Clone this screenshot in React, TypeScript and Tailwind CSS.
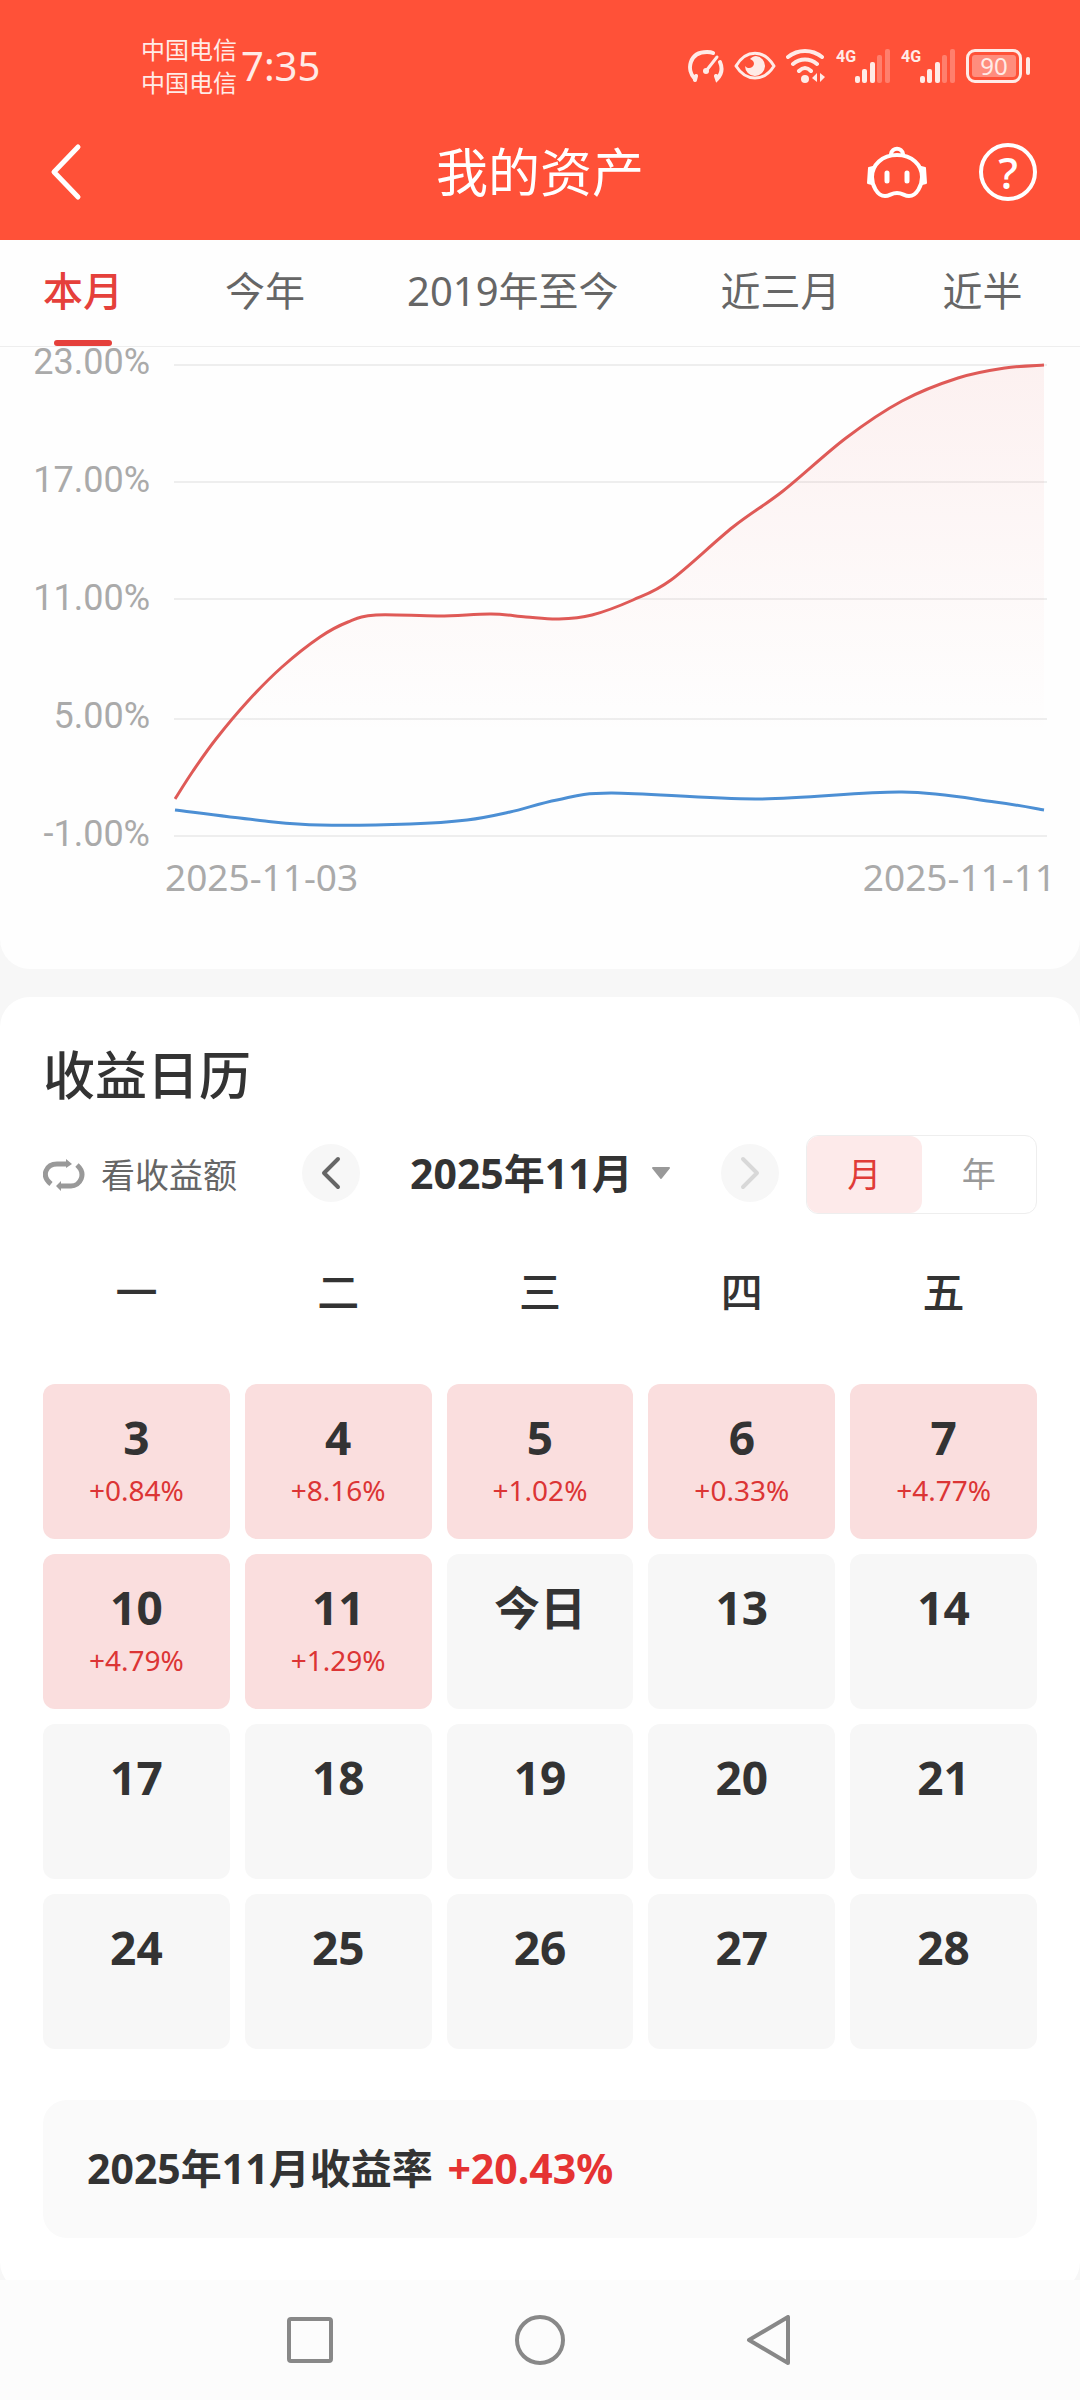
import { useState } from "react";

type Point = [number, number];

const tabs = ["本月", "今年", "2019年至今", "近三月", "近半"];
const weekdays = ["一", "二", "三", "四", "五"];
const yLabels = ["23.00%", "17.00%", "11.00%", "5.00%", "-1.00%"];
const gridLines = [18, 135, 252, 372, 489];

const days: { label: string; rate?: string }[] = [
  { label: "3", rate: "+0.84%" },
  { label: "4", rate: "+8.16%" },
  { label: "5", rate: "+1.02%" },
  { label: "6", rate: "+0.33%" },
  { label: "7", rate: "+4.77%" },
  { label: "10", rate: "+4.79%" },
  { label: "11", rate: "+1.29%" },
  { label: "今日" },
  { label: "13" },
  { label: "14" },
  { label: "17" },
  { label: "18" },
  { label: "19" },
  { label: "20" },
  { label: "21" },
  { label: "24" },
  { label: "25" },
  { label: "26" },
  { label: "27" },
  { label: "28" },
];

const mine: Point[] = [
  [1, 452], [19, 424], [42, 392], [74, 354], [108, 320], [146, 290], [174, 275], [202, 268],
  [265, 269], [317, 267], [352, 270], [385, 272], [418, 268], [459, 253], [497, 233], [559, 180],
  [609, 144], [672, 91], [728, 54], [784, 31], [831, 21], [870, 18],
];

const index: Point[] = [
  [1, 463], [91, 474], [146, 478], [236, 477], [293, 473], [336, 465],
  [383, 453], [437, 446], [583, 452], [728, 445], [821, 455], [870, 463],
];

// Catmull-Rom spline through the points
const smooth = (pts: Point[]) => {
  let d = `M${pts[0][0]} ${pts[0][1]}`;
  for (let i = 0; i < pts.length - 1; i++) {
    const p0 = pts[i - 1] || pts[i];
    const p1 = pts[i];
    const p2 = pts[i + 1];
    const p3 = pts[i + 2] || p2;
    d += ` C${p1[0] + (p2[0] - p0[0]) / 6} ${p1[1] + (p2[1] - p0[1]) / 6} ${p2[0] - (p3[0] - p1[0]) / 6} ${p2[1] - (p3[1] - p1[1]) / 6} ${p2[0]} ${p2[1]}`;
  }
  return d;
};

const Signal = () => (
  <div className="flex items-start h-[34px]">
    <span className="w-[18px] font-[Roboto] text-[16px] leading-4 font-bold">4G</span>
    <svg className="ml-px" width="36" height="34" viewBox="0 0 36 34" fill="currentColor">
      <rect x="0" y="27" width="5" height="7" rx="2" />
      <rect x="7" y="20" width="5" height="14" rx="2" />
      <rect x="15" y="13" width="5" height="21" rx="2" />
      <rect x="22" y="6" width="5" height="28" rx="2" opacity="0.3" />
      <rect x="30" y="0" width="5" height="34" rx="2" opacity="0.3" />
    </svg>
  </div>
);

const StatusBar = () => (
  <div className="flex items-center justify-between h-[104px] pt-7 pl-[141px] pr-[50px] text-[#ffebe7]">
    <div className="flex items-center gap-1">
      <div className="text-[24px] leading-[33px]">
        <p>中国电信</p>
        <p>中国电信</p>
      </div>
      <span className="text-[40px] leading-10">7:35</span>
    </div>
    <div className="flex items-center gap-[10px]">
      <svg width="36" height="34" viewBox="0 0 36 34" fill="none" stroke="currentColor" strokeWidth="4" strokeLinecap="round">
        <path d="M7 31 L8 27 M7 30 C-2 21 1 3 19 3 C21 3 23 3 25 4 M32 13 C35 20 33 26 29 30 L28 27" />
        <circle cx="18" cy="22" r="3" fill="currentColor" stroke="none" />
        <path d="M18 22 L29 8" strokeWidth="3" />
      </svg>
      <svg width="42" height="30" viewBox="0 0 42 30" fill="none">
        <path d="M2 15 C12 -2 30 -2 40 15 C30 31 12 31 2 15Z" stroke="currentColor" strokeWidth="3" strokeLinejoin="round" />
        <path d="M22 5 A10 10 0 1 1 11 15 C13 18 19 18 20 13 C20 10 18 9 16 8 C18 6 20 5 22 5Z" fill="currentColor" />
      </svg>
      <svg width="40" height="34" viewBox="0 0 40 34" fill="none" stroke="currentColor" strokeWidth="4" strokeLinecap="round">
        <path d="M2 8 C12 0 26 0 36 8 M7 15 C14 9 24 9 31 15 M13 22 C17 18 21 18 25 22" />
        <circle cx="19" cy="30" r="4" fill="currentColor" stroke="none" />
        <path d="M26 29 L31 24 V33 M34 24 V33 L39 28Z" fill="currentColor" stroke="none" />
      </svg>
      <Signal />
      <Signal />
      <div className="flex items-center gap-1">
        <div className="flex h-[34px] w-14 rounded-[9px] border-3 border-current p-[3px]">
          <span className="flex flex-1 items-center justify-center rounded-[3px] bg-white/35 text-[24px] leading-5">90</span>
        </div>
        <div className="h-[18px] w-1 rounded-full bg-current" />
      </div>
    </div>
  </div>
);

const Chart = () => (
  <section className="rounded-b-[30px] bg-[#fefefe] pb-[72px]">
    <div className="flex gap-6 pl-8 pr-8 text-[#aaaaaa]">
      <div className="flex w-[118px] flex-col justify-between text-right font-[Roboto] text-[36px] leading-[30px]">
        {yLabels.map((label) => (
          <span key={label}>{label}</span>
        ))}
      </div>
      <svg className="min-w-0 flex-1" viewBox="0 0 874 502" fill="none">
        <defs>
          <linearGradient id="area" gradientUnits="userSpaceOnUse" x1="0" y1="18" x2="0" y2="390">
            <stop offset="0" stopColor="#e5403b" stopOpacity="0.07" />
            <stop offset="1" stopColor="#e5403b" stopOpacity="0" />
          </linearGradient>
        </defs>
        {gridLines.map((y) => (
          <path key={y} d={`M0 ${y}H873`} stroke="#eeeeee" strokeWidth="2" />
        ))}
        <path d={`${smooth(mine)} V489 H1 Z`} fill="url(#area)" />
        <path d={smooth(mine)} stroke="#df5a57" strokeWidth="3" />
        <path d={smooth(index)} stroke="#4c8fd4" strokeWidth="3" />
      </svg>
    </div>
    <div className="flex justify-between pl-[165px] pr-6 pt-2 text-[37px] leading-10 text-[#aaaaaa]">
      <span>2025-11-03</span>
      <span>2025-11-11</span>
    </div>
  </section>
);

const Calendar = () => {
  const [mode, setMode] = useState("月");

  return (
    <section className="mt-7 rounded-[30px] bg-white px-[43px] pt-[45px] pb-[54px] text-[#333333]">
      <h2 className="text-[52px] leading-[66px] font-medium">收益日历</h2>

      <div className="mt-[27px] flex items-center">
        <button className="flex items-center gap-4 text-[34px] leading-10 text-[#666666]">
          <svg width="42" height="34" viewBox="-1 -1 42 34" fill="none" stroke="#999999" strokeWidth="5">
            <path d="M7 25 C-4 16 3 5 13 5 H23 M33 6 C43 15 36 27 27 27 H17" />
            <path d="M22 0 L28 5 L22 9Z M17 22 L12 27 L17 32Z" fill="#999999" stroke="none" />
          </svg>
          看收益额
        </button>
        <div className="ml-[65px] mb-1 flex items-center gap-[50px]">
          <button aria-label="上个月" className="flex size-[58px] items-center justify-center rounded-full bg-[#f7f7f7]">
            <svg width="20" height="34" viewBox="0 0 20 34" fill="none" stroke="#666666" strokeWidth="4" strokeLinecap="round" strokeLinejoin="round">
              <path d="M17 3 L3 17 L17 31" />
            </svg>
          </button>
          <button className="flex items-center gap-[18px] text-[41px] leading-[50px] font-bold">
            2025年11月
            <svg width="20" height="14" viewBox="0 0 20 14" fill="#999999" stroke="#999999" strokeWidth="2" strokeLinejoin="round">
              <path d="M2 2 H18 L10 12Z" />
            </svg>
          </button>
          <button aria-label="下个月" className="flex size-[58px] items-center justify-center rounded-full bg-[#f7f7f7]">
            <svg width="20" height="34" viewBox="0 0 20 34" fill="none" stroke="#d8d8d8" strokeWidth="4" strokeLinecap="round" strokeLinejoin="round">
              <path d="M3 3 L17 17 L3 31" />
            </svg>
          </button>
        </div>
        <div className="ml-auto flex h-[79px] w-[231px] rounded-xl border border-[#eeeeee] text-[34px]">
          {["月", "年"].map((m) => (
            <button
              key={m}
              onClick={() => setMode(m)}
              className={`flex-1 rounded-xl ${mode === m ? "bg-[#fdeaea] text-[#e03c38]" : "text-[#999999]"}`}
            >
              {m}
            </button>
          ))}
        </div>
      </div>

      <div className="mt-12 grid grid-cols-5 gap-[15px] text-center text-[42px] leading-[60px] font-medium">
        {weekdays.map((d) => (
          <span key={d}>{d}</span>
        ))}
      </div>

      <div className="mt-[62px] grid grid-cols-5 gap-[15px]">
        {days.map((day) => (
          <button
            key={day.label}
            className={`flex h-[155px] flex-col items-center rounded-xl pt-[25px] ${day.rate ? "bg-[#fadede]" : "bg-[#f7f7f7]"}`}
          >
            <span className="text-[46px] leading-[56px] font-bold">{day.label}</span>
            {day.rate && <span className="mt-[5px] text-[28px] leading-[40px] text-[#dc3535]">{day.rate}</span>}
          </button>
        ))}
      </div>

      <div className="mt-[51px] rounded-3xl bg-[#fafafa] px-11 pt-[39px] pb-[41px] text-[41px] leading-[58px] font-bold">
        2025年11月收益率 <span className="ml-1 text-[#e53333]">+20.43%</span>
      </div>
    </section>
  );
};

const App = () => {
  const [tab, setTab] = useState("本月");

  return (
    <div className="min-h-screen bg-[#f7f7f7] font-['Noto_Sans','Noto_Sans_CJK_SC',sans-serif]">
      <header className="bg-[#ff5138] text-white">
        <StatusBar />
        <div className="grid h-[136px] grid-cols-3 items-center px-[43px]">
          <button aria-label="返回" className="w-12 pl-[7px]">
            <svg width="32" height="58" viewBox="0 0 32 58" fill="none" stroke="currentColor" strokeWidth="5" strokeLinecap="round" strokeLinejoin="round">
              <path d="M28 4 L4 29 L28 54" />
            </svg>
          </button>
          <h1 className="text-center text-[52px] leading-[64px]">我的资产</h1>
          <div className="flex items-center justify-end gap-[52px]">
            <button aria-label="智能助手">
              <svg width="60" height="58" viewBox="0 0 60 58" fill="none" stroke="currentColor" strokeWidth="4" strokeLinecap="round" strokeLinejoin="round">
                <path d="M30 12 C45 12 55 22 55 34 C55 42 50 53 42 53 C37 53 36 50 30 50 C24 50 23 53 18 53 C10 53 5 42 5 34 C5 22 15 12 30 12Z" />
                <path d="M24 11 C25 4 35 4 36 11" />
                <path d="M2 25 L6 24 L5 41 L1 40Z M58 25 L54 24 L55 41 L59 40Z" fill="currentColor" strokeWidth="2" />
                <path d="M20 30 V38 M40 30 V38" strokeWidth="5" />
              </svg>
            </button>
            <button aria-label="帮助" className="flex size-[58px] items-center justify-center rounded-full border-4 border-white text-[44px] leading-10 font-medium">
              ?
            </button>
          </div>
        </div>
      </header>

      <nav className="flex h-[107px] gap-[102px] overflow-hidden border-b border-[#eeeeee] bg-[#fefefe] pl-[43px] text-[40px] whitespace-nowrap">
        {tabs.map((t) => (
          <button
            key={t}
            onClick={() => setTab(t)}
            className={`flex flex-col items-center justify-between pt-[26px] leading-[50px] ${tab === t ? "font-medium text-[#e5403b]" : "text-[#666666]"}`}
          >
            {t}
            {tab === t && <span className="h-[6px] w-[58px] rounded-full bg-[#e5403b]" />}
          </button>
        ))}
      </nav>

      <main>
        <Chart />
        <Calendar />
      </main>

      <footer className="relative -mt-3 flex h-[120px] items-center justify-center bg-[#fcfcfc] text-[#888888]">
        <button aria-label="最近任务" className="flex w-[230px] justify-center">
          <svg width="50" height="50" viewBox="0 0 50 50" fill="none" stroke="currentColor" strokeWidth="4">
            <rect x="4" y="4" width="42" height="42" rx="2" />
          </svg>
        </button>
        <button aria-label="主屏幕" className="flex w-[230px] justify-center">
          <svg width="50" height="50" viewBox="0 0 50 50" fill="none" stroke="currentColor" strokeWidth="4">
            <circle cx="25" cy="25" r="23" />
          </svg>
        </button>
        <button aria-label="返回上一页" className="flex w-[230px] justify-center">
          <svg width="50" height="50" viewBox="0 0 50 50" fill="none" stroke="currentColor" strokeWidth="4" strokeLinejoin="round">
            <path d="M43 2 V48 L4 25Z" />
          </svg>
        </button>
      </footer>
    </div>
  );
};

export default App;
